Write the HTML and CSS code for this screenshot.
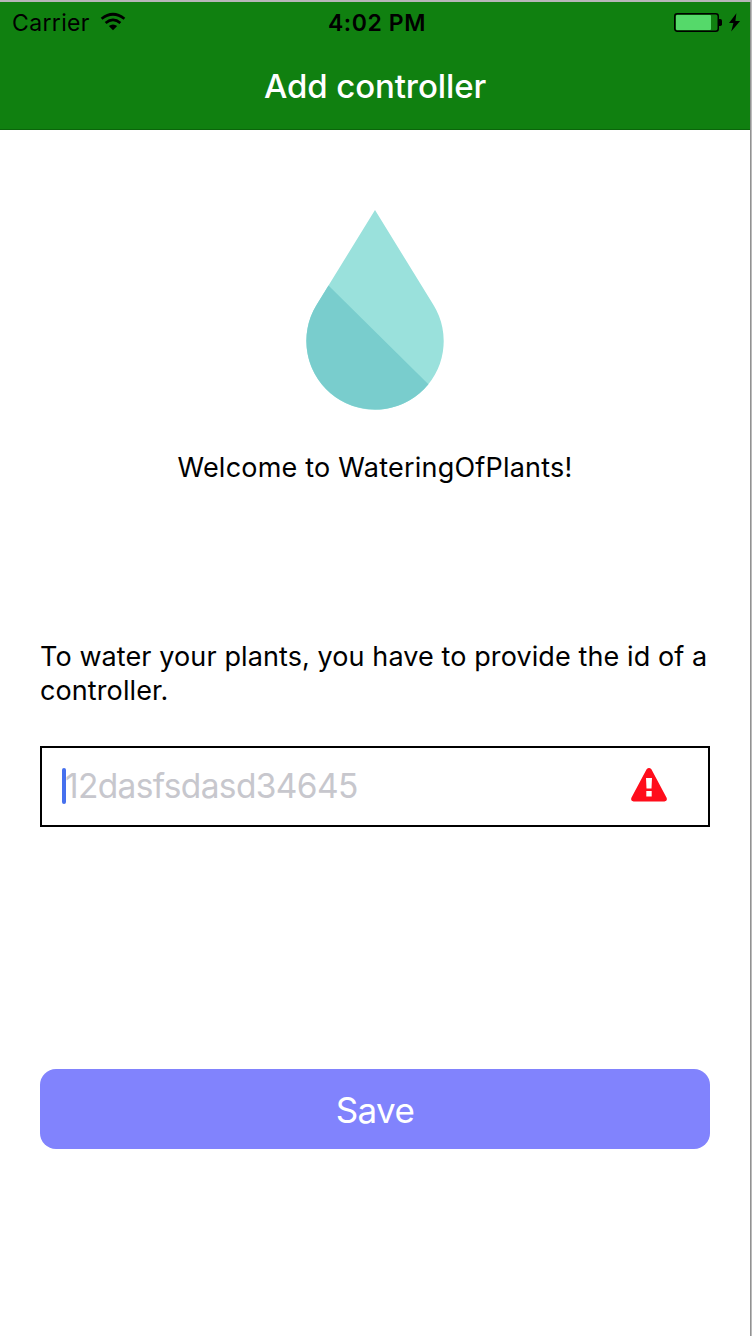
FILE: index.html
```html
<!DOCTYPE html>
<html lang="en">
<head>
<meta charset="utf-8">
<title>Add controller</title>
<link rel="stylesheet" href="styles.css">
</head>
<body>
<div class="window">
  <div class="screen">
    <header class="header">
      <div class="status">
        <div class="network">
          <span class="carrier">Carrier</span>
          <svg class="wifi" width="26" height="20" viewBox="0 0 26 20">
            <path d="M1.6 6.700Q13 -2.200 24.400 6.700M5.600 11Q13 4.900 20.400 11" fill="none" stroke="#000" stroke-width="2.7"/>
            <path d="M8.800 14Q13 10.800 17.200 14L13 18.300Z"/>
          </svg>
        </div>
        <span class="time">4:02 PM</span>
        <svg class="battery" width="68" height="22" viewBox="0 0 68 22">
          <rect x="1.75" y="2.75" width="43.5" height="17.5" rx="2.5" fill="none" stroke="#000" stroke-width="1.5"/>
          <rect x="3" y="4" width="35" height="15" rx="1" fill="#55d96a"/>
          <path d="M46 8h1.3q1.700 0 1.700 1.700v3.600q0 1.700-1.700 1.700H46z"/>
          <path d="M63.400 2.200L56 11.900h4.400l-2.200 8.500 8.900-10.500h-4.700z"/>
        </svg>
      </div>
      <h1 class="title"><span>Add controller</span></h1>
    </header>
    <main class="content">
      <svg class="drop" width="138" height="200" viewBox="0 0 138 200">
        <path d="M69 0L127.500 95A68.700 68.700 0 1 1 10.500 95Z" fill="#9ae1dc"/>
        <path d="M22.500 75.500L122.400 174.200A68.700 68.700 0 0 1 10.500 95Z" fill="#79cdcd"/>
      </svg>
      <p class="welcome">Welcome to WateringOfPlants!</p>
      <p class="prompt">To water your plants, you have to provide the id of a<br>controller.</p>
      <div class="field">
        <span class="caret"></span>
        <span class="placeholder">12dasfsdasd34645</span>
        <svg class="warning" width="36" height="34" viewBox="0 0 36 34">
          <path fill="#ff0d1b" fill-rule="evenodd" d="M15.600 1.300Q18-1.300 20.400 1.300L35.600 29.700Q36.800 33.300 33.400 33.500H2.600Q-.8 33.300.4 29.700ZM15 10L15.500 20.500H20.500L21 10ZM15.300 23V28.500H20.700V23Z"/>
        </svg>
      </div>
      <button class="save" type="button">Save</button>
    </main>
  </div>
</div>
</body>
</html>
```
FILE: styles.css
```css
* { box-sizing: border-box; }
body { margin: 0; font-family: Inter, "Liberation Sans", sans-serif; color: #000; background: #fff; }
.window { height: 1336px; border-top: 2px solid #b8b6b9; padding-right: 2px; background: linear-gradient(90deg, #929292 50%, #bbb 50%) right / 2px 100% no-repeat; }
.screen { height: 1334px; background: #fff; }
.header { height: 128px; background: #108010; border-bottom: 1px solid #0b650b; }
.status { height: 40px; padding: 0 9px 0 12px; display: grid; grid-template-columns: 1fr auto 1fr; align-items: center; }
.network { display: flex; align-items: center; gap: 10px; }
.carrier { padding-top: 2px; font-size: 23px; letter-spacing: .35px; }
.time { padding: 2px 0 0 1px; font-size: 23px; font-weight: 600; letter-spacing: .6px; }
.battery { justify-self: end; }
.title { margin: 0; height: 88px; display: flex; justify-content: center; align-items: center; font-size: 33px; font-weight: 450; color: #fff; letter-spacing: -.1px; }
.content { padding: 80px 40px 0; display: flex; flex-direction: column; }
.drop { align-self: center; }
.welcome { margin: 41px 0 0; height: 34px; line-height: 34px; text-align: center; font-size: 27px; letter-spacing: .22px; }
.prompt { margin: 155px 0 0; line-height: 34px; font-size: 27px; white-space: nowrap; letter-spacing: .1px; }
.field { margin-top: 38px; height: 81px; border: 2px solid #000; padding: 0 41px 2px 20px; display: flex; align-items: center; }
.caret { width: 4px; height: 36px; border-radius: 2px; background: #4670ee; }
.placeholder { flex: 1; margin-left: -1px; padding-top: 1px; font-size: 33.5px; letter-spacing: -.65px; color: #c7c7cd; }
.warning { margin-bottom: 1px; }
.save { margin-top: 242px; height: 80px; border: 0; border-radius: 16px; padding: 2px 0 0; background: #8183fd; color: #fff; font-family: inherit; font-size: 35px; letter-spacing: -.6px; }
```
